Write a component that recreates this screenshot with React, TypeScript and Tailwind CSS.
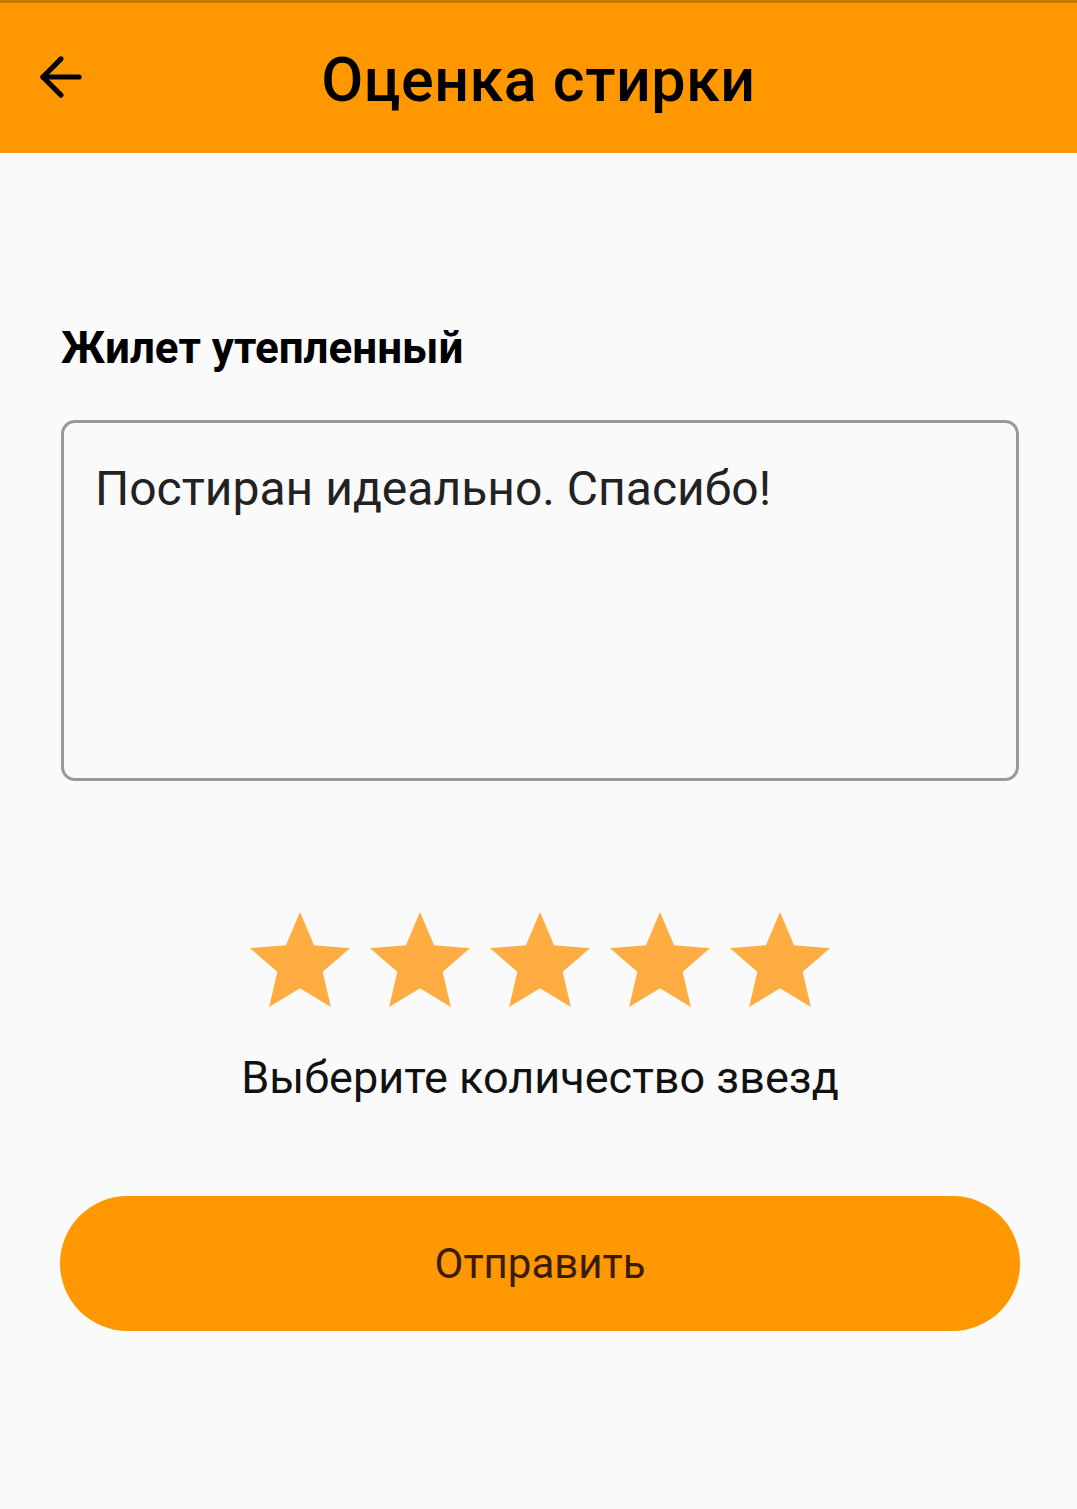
import { ArrowLeft } from "lucide-react";

const Star = () => (
  <svg viewBox="0 0 24 24" className="w-[120px] h-[120px]" fill="#ffad42">
    <path d="M12 17.27L18.18 21l-1.64-7.03L22 9.24l-7.19-.61L12 2 9.19 8.63 2 9.24l5.46 4.73L5.82 21z" />
  </svg>
);

export default function App() {
  return (
    <div className="min-h-[1509px] w-full bg-[#fafafa] font-['Roboto',sans-serif] text-black">
      <header className="h-[153px] border-t-[3px] border-[#c47a00] bg-[#ff9800] flex items-center relative">
        <ArrowLeft className="absolute left-[30px] top-[43px] w-[62px] h-[62px]" strokeWidth={2} />
        <h1 className="w-full pt-[6px] text-center text-[61px] font-medium tracking-[0.5px]">Оценка стирки</h1>
      </header>

      <main className="pl-[61px] pr-[58px] pt-[173px] flex flex-col">
        <h2 className="text-[44px] font-bold leading-none">Жилет утепленный</h2>

        <div className="mt-[50px] h-[361px] rounded-[14px] border-[3px] border-[#999999] px-[31px] pt-[42px]">
          <p className="text-[48px] leading-none text-[#222222]">Постиран идеально. Спасибо!</p>
        </div>

        <div className="mt-[121px] flex justify-center">
          {[1, 2, 3, 4, 5].map((i) => (
            <Star key={i} />
          ))}
        </div>

        <p className="mt-[33px] text-center text-[45px] leading-none text-[#111111]">
          Выберите количество звезд
        </p>

        <button className="mt-[96px] -ml-[1px] w-[calc(100%+2px)] h-[135px] rounded-full bg-[#ff9800] text-[42px] text-[#3a1c00]">
          Отправить
        </button>
      </main>
    </div>
  );
}
